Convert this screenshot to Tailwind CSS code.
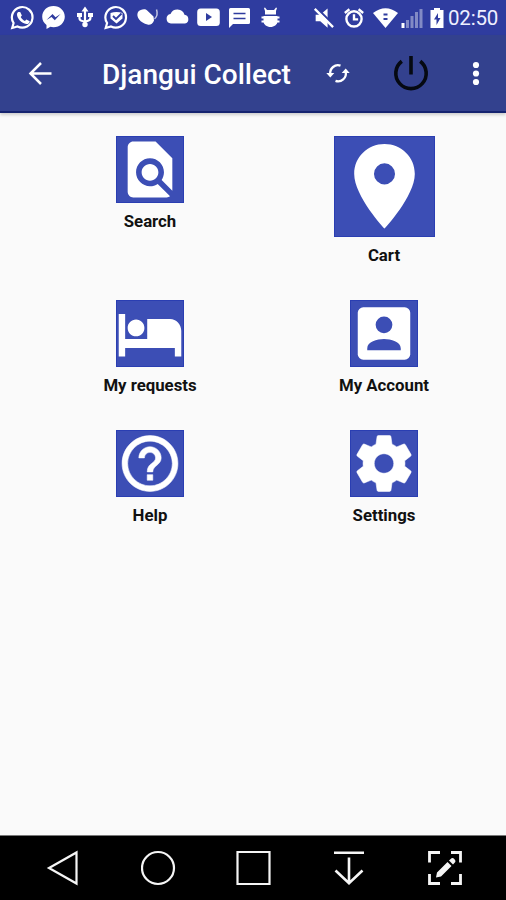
<!DOCTYPE html>
<html lang="en">
<head>
<meta charset="utf-8">
<title>Djangui Collect</title>
<script src="https://cdn.jsdelivr.net/npm/@tailwindcss/browser@4"></script>
</head>
<body class="w-[506px] h-[900px] overflow-hidden flex flex-col bg-[#fafafa] font-['Roboto',sans-serif]">
<header class="shrink-0 text-white">
  <!-- status bar -->
  <div class="h-[35px] bg-[#2f3c9f] flex items-center pl-[7px] pr-[7px]">
    <div class="flex flex-1 [&>svg]:w-[31px] [&>svg]:h-[26px] [&>svg]:shrink-0">
      <svg viewBox="-16 -12.5 31 26" fill="none" stroke="currentColor" stroke-width="2.2"><path d="M-10.8 10.500l1.400-5A10.300 10.300 0 1 1-5.500 9z"/><path d="M-4.800-5.400l2-.2 1.700 3.700-1.200 1.500c1 1.800 2.300 3 4.200 3.900l1.500-1.600 3.300 1.800c0 2-1.700 3-3.400 2.800C-1.400 5.800-6 1-6-3c0-1 .5-1.900 1.200-2.400z" fill="currentColor" stroke="none"/></svg>
      <svg viewBox="-15.500 -12 31 26"><path d="M0-11C-6.500-11-11.300-6.300-11.300-.3c0 3.500 1.700 6.300 4.300 8.200V12l3.900-2.200c1 .3 2 .4 3.100.4 6.500 0 11.300-4.700 11.300-10.500S6.500-11 0-11z" fill="currentColor"/><path d="M-7 3l6-6 3 3.300L7-3 1.300 3.300-2 0z" fill="#2f3c9f"/></svg>
      <svg viewBox="-16 -12 31 26" fill="none" stroke="currentColor" stroke-width="2.200"><path d="M0-7V8M-5.500-1v2.500Q-5.500 4 0 4.500 5.500 4 5.500.5V-2"/><path d="M0-10.500L3.500-5.500h-7zM-8-4h5v4h-5zM3-4h5v4H3z" fill="currentColor" stroke="none"/><circle cy="7.500" r="2.700" fill="currentColor" stroke="none"/></svg>
      <svg viewBox="-16.500 -12.500 31 26" fill="none" stroke="currentColor" stroke-width="2.200"><path d="M-10.800 10.500l1.400-5A10.300 10.300 0 1 1-5.500 9z"/><path d="M-6-4.500Q0-6.500 6-4.500L6 1 0 6-6 1z" fill="currentColor" stroke="none"/><path d="M-3.500-1.500L-.5 1.500 5-4" stroke="#2f3c9f" stroke-width="1.800"/></svg>
      <svg viewBox="-16.500 -12.500 31 26" fill="currentColor"><path d="M-9.500-5.500C-7-8.500-2-9-.3-7L6-1 6.500 3C5.500 6.500 2 8 0 7-7 5.500-12-.5-9.500-5.500z"/><path d="M9-8q2 6-2 9.500" fill="none" stroke="currentColor" stroke-width="1.500" opacity=".7"/></svg>
      <svg viewBox="-16 -12 31 26" fill="currentColor"><path d="M-7 6.500a4.800 4.800 0 0 1-.5-9.500A7.500 7.500 0 0 1 6.500-2.300 4.500 4.500 0 0 1 7 6.500z"/></svg>
      <svg viewBox="-15.500 -12 31 26"><rect x="-11.300" y="-8.500" width="22.600" height="17.500" rx="3.500" fill="currentColor"/><path d="M-2.500-4L3.500 0l-6 4z" fill="#2f3c9f"/></svg>
      <svg viewBox="-15.500 -12.500 31 26"><path d="M-9-9.500h18a1.500 1.500 0 0 1 1.500 1.500V5A1.500 1.500 0 0 1 9 6.500H-6.500l-4 4V-8A1.500 1.500 0 0 1-9-9.500z" fill="currentColor"/><path d="M-6-4h12M-6 1h12" stroke="#2f3c9f" stroke-width="1.300"/></svg>
      <svg viewBox="-15.500 -12.500 31 26" fill="currentColor"><path d="M-5.500-3v-3.500l-1-3 1-.5L-3.500-7.500h7L5.500-10l1 .5-1 3V-3zM-7-1.500H7V4C7 7 3.500 9.500 0 9.500S-7 7-7 4z"/><path d="M-9 0h18M-9 4h18" stroke="currentColor" stroke-width="2"/></svg>
    </div>
    <div class="flex items-center">
      <svg class="w-[22px] h-[22px]" viewBox="-1 0 24 24" fill="currentColor"><path d="M3 8.500v7h5l8 7V1.500l-8 7z"/><path d="M3 0l20 20" stroke="#2f3c9f" stroke-width="2.500"/><path d="M2 2l20 20" stroke="currentColor" stroke-width="2.500"/></svg>
      <svg class="ml-[9px] w-[22px] h-[22px]" viewBox="0 0 24 24" fill="none" stroke="currentColor" stroke-width="2.600"><circle cx="12" cy="13" r="8.300"/><path d="M12 8v5.500h4.500M2 6.500L7 2.500M22 6.500l-5-4"/></svg>
      <svg class="ml-[8px] w-[26px] h-[22px]" viewBox="0.500 0 26 22"><path d="M.5 6Q13-3.500 25.500 6L13 21z" fill="currentColor"/><path d="M11 7.500h4M11 12h4" stroke="#2f3c9f" stroke-width="2.200"/></svg>
      <svg class="ml-[2px] w-[23px] h-[22px]" viewBox="0.500 0 23 22" fill="currentColor"><path d="M1 16h3v5H1z"/><path d="M5.500 13h3v8h-3zM10 9h3v12h-3zM14.500 5h3v16h-3zM19 2h3v19h-3z" opacity=".4"/></svg>
      <svg class="ml-[6px] w-[14px] h-[22px]" viewBox="0 0 14 22"><path d="M4 1h6v2h3.500v18H.5V3H4z" fill="currentColor"/><path d="M8 6l-4 6.500h2.500V18l4-7H8z" fill="#2f3c9f"/></svg>
      <span class="ml-[4px] w-[51px] text-[20.500px] leading-[22px] tracking-[-0.200px] whitespace-nowrap text-[#eef0ff]">02:50</span>
    </div>
  </div>
  <!-- app bar -->
  <div class="h-[78px] bg-[#33418e] border-b-2 border-[#15236f] flex items-center pl-[28px] pr-[18px] shadow-[0_2px_3px_rgba(0,0,0,.18)]">
    <svg class="w-[24px] h-[24px]" viewBox="0 0 24 24" fill="none" stroke="currentColor" stroke-width="2.500"><path d="M23.500 12.500H2.500M13 2L2.500 12.500 13 23"/></svg>
    <h1 class="ml-[50px] mt-[4px] w-[192px] text-[28px] leading-[32px] font-medium whitespace-nowrap">Djangui Collect</h1>
    <svg class="ml-[32px] w-[24px] h-[22px]" viewBox="0 0 24 22" fill="none" stroke="currentColor" stroke-width="2.300"><path d="M4.300 12A7.700 7.700 0 0 1 14.500 3.700M19.700 10A7.700 7.700 0 0 1 9.500 18.800"/><path d="M.3 11h8L4.300 15.500zM15.700 11h8L19.700 6.500z" fill="currentColor" stroke="none"/></svg>
    <svg class="ml-[43px] w-[36px] h-[36px] text-[#050912]" viewBox="0 0 36 36" fill="none" stroke="currentColor" stroke-width="3.600"><path d="M18 1v18.500M8.800 6.300a15.200 15.200 0 1 0 18.400 0"/></svg>
    <svg class="ml-auto w-[24px] h-[26px]" viewBox="0 0 24 26" fill="currentColor"><circle cx="12" cy="5" r="3.100"/><circle cx="12" cy="13.500" r="3.100"/><circle cx="12" cy="22" r="3.100"/></svg>
  </div>
</header>

<main class="flex-1 grid grid-cols-[234px_234px] content-start pl-[33px] pt-[23px] text-[16.800px] leading-[20px] font-bold text-[#111]">
  <a class="h-[164px] flex flex-col items-center gap-[8px]">
    <svg class="w-[68px] h-[67px] bg-[#3c4eb5] text-white outline -outline-offset-1 outline-[#2a3eb2]" viewBox="0 0 24 24" fill="currentColor"><path d="M20 19.590V8l-6-6H6c-1.100 0-1.990.9-1.990 2L4 20c0 1.100.89 2 1.990 2H18c.45 0 .85-.15 1.190-.4l-4.430-4.430c-.8.52-1.740.83-2.760.83-2.760 0-5-2.240-5-5s2.240-5 5-5 5 2.240 5 5c0 1.020-.31 1.960-.83 2.750L20 19.590zM9 13c0 1.660 1.340 3 3 3s3-1.340 3-3-1.340-3-3-3-3 1.340-3 3z"/></svg>
    <span>Search</span>
  </a>
  <a class="h-[164px] flex flex-col items-center gap-[8px]">
    <svg class="w-[101px] h-[101px] bg-[#3c4eb5] text-white outline -outline-offset-1 outline-[#2a3eb2]" viewBox="0 0 24 24" fill="currentColor"><path d="M12 1.900C8 1.900 4.800 5 4.800 9c0 5.250 7.200 13 7.200 13s7.200-7.750 7.200-13c0-4-3.200-7.100-7.200-7.100zm0 9.600a2.500 2.500 0 0 1 0-5 2.500 2.500 0 0 1 0 5z"/></svg>
    <span>Cart</span>
  </a>
  <a class="h-[130px] flex flex-col items-center gap-[8px]">
    <svg class="w-[68px] h-[67px] bg-[#3c4eb5] text-white outline -outline-offset-1 outline-[#2a3eb2]" viewBox="0 0 24 24" fill="currentColor"><path d="M7 13c1.660 0 3-1.340 3-3S8.660 7 7 7s-3 1.340-3 3 1.340 3 3 3zm12.200-6.200H11V14H3.100V5H.8v15.200h2.300V17.200h17.800v3h2.300V11c0-2.300-1.800-4.200-4-4.200z"/></svg>
    <span>My requests</span>
  </a>
  <a class="h-[130px] flex flex-col items-center gap-[8px]">
    <svg class="w-[68px] h-[67px] bg-[#3c4eb5] outline -outline-offset-1 outline-[#2a3eb2]" viewBox="0 0 24 24"><rect x="2.600" y="2.600" width="18.800" height="18.800" rx="2" fill="#fff"/><path d="M12 5.900a3 3 0 1 1 0 6 3 3 0 0 1 0-6zM6 18v-.7C6 15 9.500 14 12 14s6 1 6 3.300v.7z" fill="#3c4eb5"/></svg>
    <span>My Account</span>
  </a>
  <a class="h-[130px] flex flex-col items-center gap-[8px]">
    <svg class="w-[68px] h-[67px] bg-[#3c4eb5] text-white outline -outline-offset-1 outline-[#2a3eb2]" viewBox="0 0 24 24" fill="currentColor" stroke="currentColor" stroke-width=".2"><path d="M11 18h2v-2h-2v2zm1-16C6.480 2 2 6.480 2 12s4.480 10 10 10 10-4.480 10-10S17.520 2 12 2zm0 18c-4.410 0-8-3.590-8-8s3.590-8 8-8 8 3.590 8 8-3.590 8-8 8zm0-14c-2.210 0-4 1.790-4 4h2c0-1.100.9-2 2-2s2 .9 2 2c0 2-3 1.750-3 5h2c0-2.250 3-2.500 3-5 0-2.210-1.790-4-4-4z"/></svg>
    <span>Help</span>
  </a>
  <a class="h-[130px] flex flex-col items-center gap-[8px]">
    <svg class="w-[68px] h-[67px] bg-[#3c4eb5] text-white outline -outline-offset-1 outline-[#2a3eb2]" viewBox="0 0 24 24" fill="currentColor" stroke="currentColor" stroke-width=".2"><path d="M19.430 12.980c.04-.32.07-.64.07-.98s-.03-.66-.07-.98l2.110-1.650c.19-.15.24-.42.12-.64l-2-3.460c-.12-.22-.39-.3-.61-.22l-2.490 1c-.52-.4-1.080-.73-1.690-.98l-.38-2.650C14.460 2.180 14.250 2 14 2h-4c-.25 0-.46.18-.49.42l-.38 2.650c-.61.25-1.170.59-1.690.98l-2.490-1c-.23-.09-.49 0-.61.22l-2 3.460c-.13.22-.07.49.12.64l2.110 1.650c-.04.32-.07.65-.07.98s.03.66.07.98l-2.110 1.650c-.19.15-.24.42-.12.64l2 3.460c.12.22.39.3.61.22l2.490-1c.52.4 1.080.73 1.690.98l.38 2.650c.03.24.24.42.49.42h4c.25 0 .46-.18.49-.42l.38-2.650c.61-.25 1.170-.59 1.690-.98l2.490 1c.23.09.49 0 .61-.22l2-3.460c.12-.22.07-.49-.12-.64l-2.110-1.650zM12 15.500c-1.930 0-3.500-1.570-3.500-3.500s1.570-3.500 3.500-3.500 3.500 1.570 3.500 3.500-1.570 3.500-3.500 3.500z"/></svg>
    <span>Settings</span>
  </a>
</main>

<!-- navigation bar -->
<nav class="shrink-0 h-[65px] bg-black border-t border-[#777] text-[#f5f5f5] flex items-center justify-between pl-[45px] pr-[43px] [&>svg]:w-[36px] [&>svg]:h-[36px]">
  <svg viewBox="0 0 36 36" fill="none" stroke="currentColor" stroke-width="2.200"><path d="M31.500 2.500v31L4 18z"/></svg>
  <svg viewBox="1 0 36 36" fill="none" stroke="currentColor" stroke-width="2.200"><circle cx="18" cy="18" r="16"/></svg>
  <svg viewBox="0.500 0 36 36" fill="none" stroke="currentColor" stroke-width="2.200"><path d="M2 2h32v32H2z"/></svg>
  <svg viewBox="1 0 36 36" fill="none" stroke="currentColor" stroke-width="2.600"><path d="M3 2.800h30M18 7.500V33M4.500 20.500L18 33.300l13.500-12.800"/></svg>
  <svg viewBox="0 0 36 36" fill="none" stroke="currentColor" stroke-width="2.800"><path d="M2.500 12.500V2.500h10.500M24 2.500h9.500v10M33.500 24v9.500H24M13 33.500H2.500V24"/><path d="M9 27.500l1-5L20.500 12l4 4L14 26.500zM22 10.500l2.500-2.300q1.500-.6 3 1t.8 2.800L26 14.500z" fill="currentColor" stroke="none"/></svg>
</nav>
</body>
</html>
